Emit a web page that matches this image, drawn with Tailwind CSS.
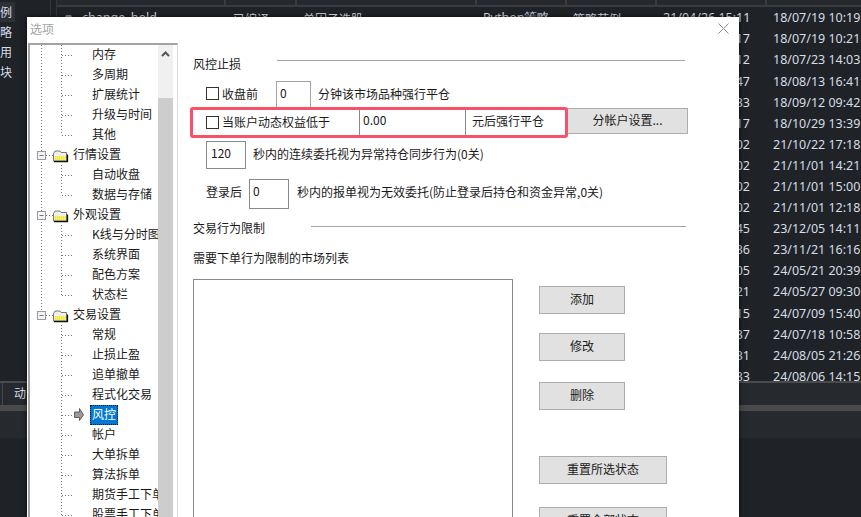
<!DOCTYPE html>
<html lang="zh">
<head>
<meta charset="utf-8">
<title>选项</title>
<script src="https://cdn.jsdelivr.net/npm/@tailwindcss/browser@4"></script>
</head>
<body class="m-0 bg-[#1f2327] font-['Noto_Sans_CJK_SC',sans-serif] text-xs">
<div class="relative w-[861px] h-[517px] overflow-hidden bg-[#1f2327] text-[#d5dde6]">

  <!-- application behind the dialog -->
  <div class="flex h-[381px]">
    <aside class="w-[51px] shrink-0 border-r border-[#33363b] pt-[2px] leading-5">
      <div class="w-[15px] h-5 bg-[#2d3035]">例</div>
      <div class="h-5">略</div>
      <div class="h-5">用</div>
      <div class="h-5">块</div>
    </aside>
    <div class="flex-1 ml-[5px] border-l border-[#33363b] font-['Noto_Sans',sans-serif] text-[12.5px]">
      <div class="flex h-[7px] bg-[#25282d] border-b-2 border-[#3a3c40]">
        <div class="w-[169px] border-r-2 border-[#3a3c40]"></div>
        <div class="w-[71px] border-r-2 border-[#3a3c40]"></div>
        <div class="w-[180px] border-r-2 border-[#3a3c40]"></div>
        <div class="w-[90px] border-r-2 border-[#3a3c40]"></div>
        <div class="w-[90px] border-r-2 border-[#3a3c40]"></div>
        <div class="w-[110px] border-r-2 border-[#3a3c40]"></div>
      </div>
      <div class="flex h-[21.1px] items-center mt-px">
        <div class="w-[169px] pl-[6px] flex items-center gap-[10px]">
          <svg class="w-[9px] h-[8px]" viewBox="0 0 9 8"><path d="M0 2H2L3 0H8L9 2V8H0Z" fill="#8d9196"/></svg>
          <span>change_hold</span>
        </div>
        <div class="w-[71px] pl-[7px] font-['Noto_Sans_CJK_SC',sans-serif] text-xs">已编译</div>
        <div class="w-[180px] pl-[6px] font-['Noto_Sans_CJK_SC',sans-serif] text-xs">单因子选股</div>
        <div class="w-[90px] pl-[6px]">Python策略</div>
        <div class="w-[90px] pl-[6px] font-['Noto_Sans_CJK_SC',sans-serif] text-xs">策略范例</div>
        <div class="w-[110px] pl-[6px]">21/04/26 15:11</div>
        <div class="pl-[6px] whitespace-nowrap">18/07/19 10:19</div>
      </div>
      <div class="flex h-[21.1px] items-center"><div class="w-[693px] text-right">17</div><div class="pl-[23px] whitespace-nowrap">18/07/19 10:21</div></div>
      <div class="flex h-[21.1px] items-center"><div class="w-[693px] text-right">12</div><div class="pl-[23px] whitespace-nowrap">18/07/23 14:03</div></div>
      <div class="flex h-[21.1px] items-center"><div class="w-[693px] text-right">47</div><div class="pl-[23px] whitespace-nowrap">18/08/13 16:41</div></div>
      <div class="flex h-[21.1px] items-center"><div class="w-[693px] text-right">33</div><div class="pl-[23px] whitespace-nowrap">18/09/12 09:42</div></div>
      <div class="flex h-[21.1px] items-center"><div class="w-[693px] text-right">17</div><div class="pl-[23px] whitespace-nowrap">18/10/29 13:39</div></div>
      <div class="flex h-[21.1px] items-center"><div class="w-[693px] text-right">02</div><div class="pl-[23px] whitespace-nowrap">21/10/22 17:18</div></div>
      <div class="flex h-[21.1px] items-center"><div class="w-[693px] text-right">02</div><div class="pl-[23px] whitespace-nowrap">21/11/01 14:21</div></div>
      <div class="flex h-[21.1px] items-center"><div class="w-[693px] text-right">02</div><div class="pl-[23px] whitespace-nowrap">21/11/01 15:00</div></div>
      <div class="flex h-[21.1px] items-center"><div class="w-[693px] text-right">02</div><div class="pl-[23px] whitespace-nowrap">21/11/01 12:18</div></div>
      <div class="flex h-[21.1px] items-center"><div class="w-[693px] text-right">45</div><div class="pl-[23px] whitespace-nowrap">23/12/05 14:11</div></div>
      <div class="flex h-[21.1px] items-center"><div class="w-[693px] text-right">36</div><div class="pl-[23px] whitespace-nowrap">23/11/21 16:16</div></div>
      <div class="flex h-[21.1px] items-center"><div class="w-[693px] text-right">05</div><div class="pl-[23px] whitespace-nowrap">24/05/21 20:39</div></div>
      <div class="flex h-[21.1px] items-center"><div class="w-[693px] text-right">21</div><div class="pl-[23px] whitespace-nowrap">24/05/27 09:30</div></div>
      <div class="flex h-[21.1px] items-center"><div class="w-[693px] text-right">15</div><div class="pl-[23px] whitespace-nowrap">24/07/09 15:40</div></div>
      <div class="flex h-[21.1px] items-center"><div class="w-[693px] text-right">37</div><div class="pl-[23px] whitespace-nowrap">24/07/18 10:58</div></div>
      <div class="flex h-[21.1px] items-center"><div class="w-[693px] text-right">31</div><div class="pl-[23px] whitespace-nowrap">24/08/05 21:26</div></div>
      <div class="flex h-[21.1px] items-center"><div class="w-[693px] text-right">33</div><div class="pl-[23px] whitespace-nowrap">24/08/06 14:15</div></div>
    </div>
  </div>
  <div class="border-t-2 border-[#4a4a4a] bg-[#26292e] h-[57px]">
    <div class="flex h-[22px]">
      <div class="w-[3px] border-r border-[#44474b]"></div>
      <div class="w-[60px] pl-[11px] leading-[20px] border-r border-[#44474b]">动</div>
    </div>
    <div class="h-[6px] bg-[#4a4a4a]"></div>
  </div>

  <!-- options dialog -->
  <div class="absolute left-[27px] top-[17px] w-[712px] h-[500px] overflow-hidden bg-white text-[#1a1a1a] shadow-[0_0_5px_rgba(0,0,0,0.7)]">
    <div class="flex items-center justify-between h-[26px] pl-[3px] pr-[9px] text-[#a3a3a3]">
      <span class="mt-[-3px]">选项</span>
      <svg class="w-[11px] h-[11px] mt-[-4px] mr-px" viewBox="0 0 11 11"><path d="M0.5 0.5 10.5 10.5M10.5 0.5 0.5 10.5" stroke="#8a8a8a" stroke-width="1" fill="none"/></svg>
    </div>

    <div class="flex">
      <!-- tree -->
      <div class="relative ml-px w-[150px] h-[474px] shrink-0 overflow-hidden flex border-l-2 border-t-2 border-r border-[#a3a3a3] border-r-[#dedede] box-border">
        <div class="relative w-[128px] shrink-0 overflow-hidden whitespace-nowrap leading-[18px]">
          <svg class="absolute left-0 top-0" width="128" height="474" viewBox="0 0 128 474">
            <defs>
              <pattern id="dither" width="2" height="2" patternUnits="userSpaceOnUse">
                <rect width="2" height="2" fill="#f5e63a"/>
                <rect width="1" height="1" fill="#fbf7c8"/>
              </pattern>
              <g id="node">
                <rect x="7.5" y="-4" width="8" height="8" fill="#f4f4f4" stroke="#9a9a9a"/>
                <path d="M9.5 0H13.5" stroke="#5a78a8"/>
                <path d="M23.5 -2 25 -4.5H30L31 -3H36.5V5.5H23.5Z" fill="#efefef" stroke="#777"/>
                <path d="M24.5 0.5 36 0.5V5H24.5Z" fill="url(#dither)"/>
                <path d="M24 6H37.5V-1" stroke="#111" fill="none" stroke-width="1.3"/>
              </g>
            </defs>
            <g stroke="#777" stroke-width="1" stroke-dasharray="1 2" fill="none">
              <path d="M11.5 0V270"/>
              <path d="M31.5 0V90M31.5 120V150M31.5 180V250M31.5 280V474"/>
              <path d="M32 10.5H42M32 30.5H42M32 50.5H42M32 70.5H42M32 90.5H42M32 130.5H42M32 150.5H42M32 190.5H42M32 210.5H42M32 230.5H42M32 250.5H42M32 290.5H42M32 310.5H42M32 330.5H42M32 350.5H42M32 370.5H42M32 390.5H42M32 410.5H42M32 430.5H42M32 450.5H42M32 470.5H42"/>
              <path d="M16 110.5H23M16 170.5H23M16 270.5H23"/>
            </g>
            <use href="#node" y="110.5"/>
            <use href="#node" y="170.5"/>
            <use href="#node" y="270.5"/>
            <path d="M44.5 367H49.5V363.5L53.5 370 49.5 375.5V372.5H44.5Z" fill="#9a9a9a" stroke="#444" stroke-width="0.8"/>
          </svg>
          <div class="relative pl-[62px] h-5">内存</div>
          <div class="relative pl-[62px] h-5">多周期</div>
          <div class="relative pl-[62px] h-5">扩展统计</div>
          <div class="relative pl-[62px] h-5">升级与时间</div>
          <div class="relative pl-[62px] h-5">其他</div>
          <div class="relative pl-[43px] h-5">行情设置</div>
          <div class="relative pl-[62px] h-5">自动收盘</div>
          <div class="relative pl-[62px] h-5">数据与存储</div>
          <div class="relative pl-[43px] h-5">外观设置</div>
          <div class="relative pl-[62px] h-5">K线与分时图</div>
          <div class="relative pl-[62px] h-5">系统界面</div>
          <div class="relative pl-[62px] h-5">配色方案</div>
          <div class="relative pl-[62px] h-5">状态栏</div>
          <div class="relative pl-[43px] h-5">交易设置</div>
          <div class="relative pl-[62px] h-5">常规</div>
          <div class="relative pl-[62px] h-5">止损止盈</div>
          <div class="relative pl-[62px] h-5">追单撤单</div>
          <div class="relative pl-[62px] h-5">程式化交易</div>
          <div class="relative pl-[60px] h-5"><span class="inline-block w-[28px] h-5 pl-[2px] bg-[#0078d7] text-white outline-1 outline-dotted outline-offset-[-1px] outline-[#1a1a1a]">风控</span></div>
          <div class="relative pl-[62px] h-5">帐户</div>
          <div class="relative pl-[62px] h-5">大单拆单</div>
          <div class="relative pl-[62px] h-5">算法拆单</div>
          <div class="relative pl-[62px] h-5">期货手工下单</div>
          <div class="relative pl-[62px] h-5">股票手工下单</div>
        </div>
        <div class="w-[15px] shrink-0 bg-[#cdcdcd] flex flex-col">
          <div class="h-[53px] bg-[#f0f0f0] flex justify-center pt-[6px]">
            <svg class="w-[9px] h-[6px]" viewBox="0 0 9 6"><path d="M1 5 4.5 1.5 8 5" stroke="#555" stroke-width="2" fill="none"/></svg>
          </div>
        </div>
      </div>

      <!-- settings form -->
      <div class="pl-[15px] mt-[11px] flex-1 leading-5">
        <div class="flex h-5">
          <span class="w-[84px]">风控止损</span>
          <span class="w-[408px] h-px mt-[6px] bg-[#a3a3a3]"></span>
        </div>

        <div class="flex h-[26px] mt-[7px] pl-[13px]">
          <span class="w-[13px] h-[13px] mt-[6px] border border-[#333] mr-[3px]"></span>
          <span class="w-[54px] mt-[3px]">收盘前</span>
          <span class="w-[35px] h-[27px] border border-[#a3a3a3] pl-[3px] pt-[1px]">0</span>
          <span class="ml-[7px] mt-[3px]">分钟该市场品种强行平仓</span>
        </div>

        <div class="flex h-[31px]">
          <div class="relative z-10 flex w-[378px] h-[31px] ml-[-3px] border-[3px] rounded-[3px] border-[#f8516a]">
            <div class="flex w-[167px] pl-[13px] border-r border-[#8a8a8a]">
              <span class="w-[13px] h-[13px] mt-[6px] border border-[#333] mr-[3px]"></span>
              <span class="mt-[2px]">当账户动态权益低于</span>
            </div>
            <div class="w-[106px] pl-[3px] border-r border-[#8a8a8a]">0.00</div>
            <div class="pl-[6px] mt-[1px]">元后强行平仓</div>
          </div>
          <div class="w-[121px] h-[26px] ml-[-1px] mt-px border border-[#adadad] bg-[#e1e1e1] text-center leading-[21px]">分帐户设置...</div>
        </div>

        <div class="flex h-[28px] mt-[3px] pl-[13px]">
          <span class="w-[40px] h-[28px] border border-[#8a8a8a] pl-[4px] pt-[1px]">120</span>
          <span class="ml-[7px] mt-[3px]">秒内的连续委托视为异常持仓同步行为(0关)</span>
        </div>

        <div class="flex h-[30px] mt-[10px] pl-[13px]">
          <span class="w-[43px] mt-[3px]">登录后</span>
          <span class="w-[40px] h-[30px] border border-[#8a8a8a] pl-[3px] pt-px">0</span>
          <span class="ml-[8px] mt-[3px]">秒内的报单视为无效委托(防止登录后持仓和资金异常,0关)</span>
        </div>

        <div class="flex h-5 mt-[9px]">
          <span class="w-[118px]">交易行为限制</span>
          <span class="w-[375px] h-px mt-[8px] bg-[#a3a3a3]"></span>
        </div>

        <div class="h-5 mt-[10px]">需要下单行为限制的市场列表</div>

        <div class="flex mt-[11px]">
          <div class="w-[320px] h-[240px] border border-[#8a8a8a]"></div>
          <div class="ml-[26px] pt-[7px] flex flex-col items-start">
            <div class="w-[86px] h-[28px] border border-[#adadad] bg-[#e1e1e1] text-center leading-[23px]">添加</div>
            <div class="w-[86px] h-[28px] mt-[19px] border border-[#adadad] bg-[#e1e1e1] text-center leading-[23px]">修改</div>
            <div class="w-[86px] h-[28px] mt-[21px] border border-[#adadad] bg-[#e1e1e1] text-center leading-[23px]">删除</div>
            <div class="w-[128px] h-[28px] mt-[46px] border border-[#adadad] bg-[#e1e1e1] text-center leading-[23px]">重置所选状态</div>
            <div class="w-[128px] h-[28px] mt-[23px] border border-[#adadad] bg-[#e1e1e1] text-center leading-[23px]">重置全部状态</div>
          </div>
        </div>
      </div>
    </div>
  </div>
</div>
</body>
</html>
